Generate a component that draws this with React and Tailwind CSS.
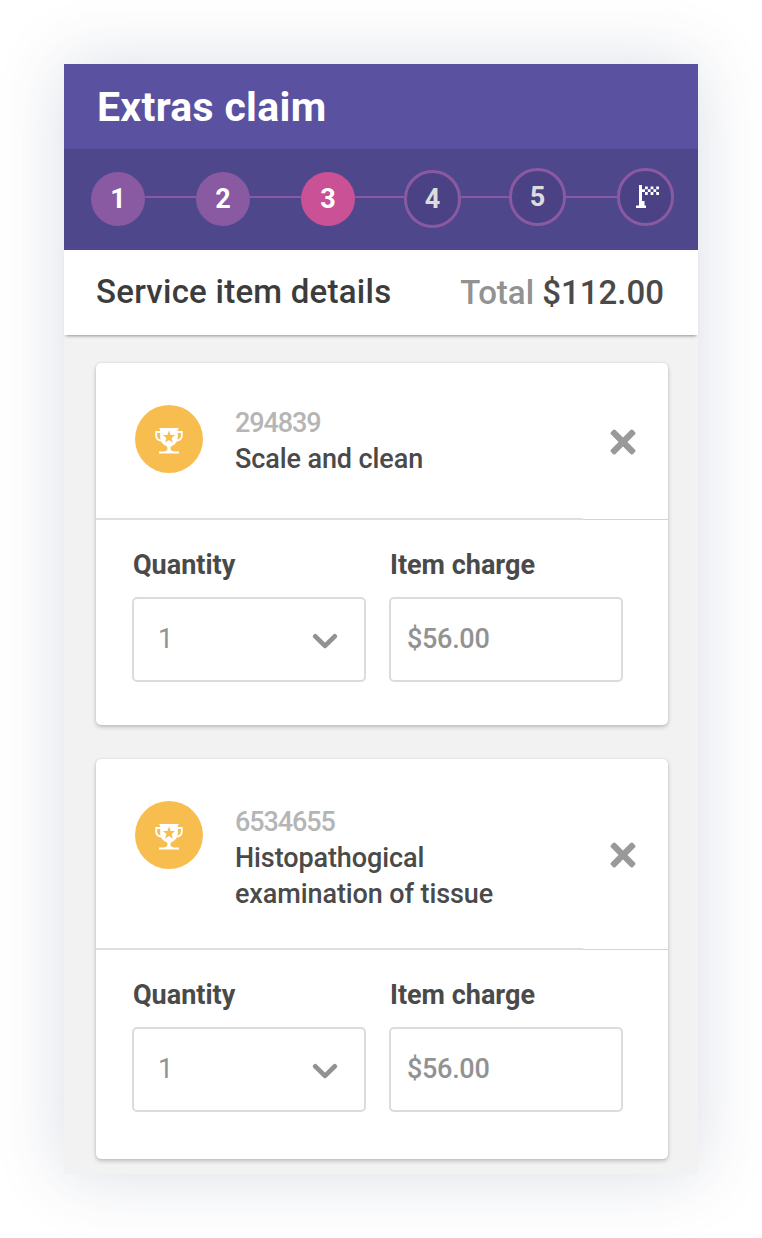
const steps = [
  { label: '1', state: 'done', line: 'w-[51px]' },
  { label: '2', state: 'done', line: 'w-[51px]' },
  { label: '3', state: 'current', line: 'w-[49px]' },
  { label: '4', state: 'todo', offset: 'mt-[3px]', line: 'w-12' },
  { label: '5', state: 'todo', offset: 'mt-0', line: 'w-[51px]' },
  { label: 'flag', state: 'todo', offset: 'mt-0' },
];

const items = [
  {
    code: '294839',
    name: ['Scale and clean'],
    head: 'h-[155px]',
    textTop: 'mt-[42px]',
    closeTop: 'mt-[66px]',
    body: 'h-[205px]',
  },
  {
    code: '6534655',
    name: ['Histopathogical', 'examination of tissue'],
    head: 'h-[189px]',
    textTop: 'mt-[45px]',
    closeTop: 'mt-[83px]',
    body: 'h-[209px]',
  },
];

function FlagIcon() {
  return (
    <svg className="ml-1" width="24" height="24" viewBox="0 0 24 24" fill="#fff">
      <path d="M3 0h3v16h2.500v4.500H10V23H0v-2.500h3z" />
      <path d="M9 1.500h2.800v2.800H9zM14.600 1.500h2.800v2.800h-2.800zM20.200 1.500H23v2.800h-2.800zM6 4.300h3v2.800H6zM11.800 4.300h2.800v2.800h-2.800zM17.400 4.300h2.800v2.800h-2.800zM9 7.100h2.800v2.800H9zM14.600 7.100h2.800v2.800h-2.800zM20.200 7.100H23v2.800h-2.800z" />
    </svg>
  );
}

function TrophyIcon() {
  return (
    <svg width="28" height="26" viewBox="0 0 28 26" fill="none">
      <path d="M6 4H1.200v3.500c0 3 1.600 4.800 5.300 5.200M22 4h4.800v3.500c0 3-1.600 4.800-5.300 5.200" stroke="#fff" strokeWidth="1.8" />
      <path
        d="M4.300 0h19.400c0 1-.9 1.300-.9 2.300v6.700c0 4.500-2.600 7.600-6.300 9.300-.9.400-1 1.200-1 2.200 0 1.700 1.300 2.600 3.500 2.900h5V25.500H4v-2.100h5c2.200-.3 3.500-1.200 3.500-2.900 0-1-.1-1.800-1-2.200C7.800 16.600 5.200 13.500 5.200 9V2.300C5.200 1.300 4.300 1 4.300 0z"
        fill="#fff"
      />
      <path d="M14 2.600l1.600 4.300 4.500.2-3.500 2.900 1.200 4.400-3.800-2.500-3.800 2.500 1.200-4.400-3.500-2.900 4.500-.2z" fill="#f7bd4e" />
    </svg>
  );
}

function CloseIcon() {
  return (
    <svg width="26" height="26" viewBox="0 0 26 26" fill="#999">
      <rect x="-2.500" y="9.900" width="31" height="6.200" rx="1.800" transform="rotate(45 13 13)" />
      <rect x="-2.500" y="9.900" width="31" height="6.200" rx="1.800" transform="rotate(-45 13 13)" />
    </svg>
  );
}

function ChevronIcon() {
  return (
    <svg className="mt-0.5" width="26" height="16" viewBox="0 0 26 16" fill="none" stroke="#929292" strokeWidth="4.800" strokeLinecap="round" strokeLinejoin="round">
      <path d="M3.300 3.400l9.700 9.500 9.700-9.500" />
    </svg>
  );
}

function Step({ label, state, offset }) {
  if (state === 'todo') {
    return (
      <div className={`flex h-[58px] w-[57px] shrink-0 items-center justify-center rounded-full border-[3px] border-[#895aa1] bg-[#4a4284] text-[27px] font-bold text-[#dcdcdc] ${offset}`}>
        {label === 'flag' ? <FlagIcon /> : <span className="pt-px">{label}</span>}
      </div>
    );
  }
  return (
    <div
      className={`mt-[3px] flex size-[54px] shrink-0 items-center justify-center rounded-full text-[27px] font-bold text-white ${
        state === 'current' ? 'bg-[#cb5197]' : 'bg-[#895aa1]'
      }`}
    >
      <span className="pt-0.5">{label}</span>
    </div>
  );
}

function ItemCard({ item }) {
  return (
    <section className="w-[572px] rounded-[5px] bg-white shadow-[0_2px_4px_rgba(0,0,0,0.22),0_0_2px_rgba(0,0,0,0.1)]">
      <div className={`flex items-start ${item.head}`}>
        <div className="mt-[42px] ml-[39px] flex size-[68px] shrink-0 items-center justify-center rounded-full bg-[#f7bd4e] pt-1">
          <TrophyIcon />
        </div>
        <div className={`ml-8 w-[375px] text-[27px] leading-9 font-medium whitespace-nowrap text-[#4a4a4a] ${item.textTop}`}>
          <p className="tracking-[-1.1px] text-[#b5b5b5]">{item.code}</p>
          {item.name.map((line) => (
            <p key={line} className="tracking-[-0.1px]">
              {line}
            </p>
          ))}
        </div>
        <button className={item.closeTop} aria-label="Remove item">
          <CloseIcon />
        </button>
      </div>
      <div className="flex items-end">
        <div className="h-0.5 w-[487px] bg-[#dfdfdf]" />
        <div className="h-px grow bg-[#d5d5d5]" />
      </div>
      <div className={`flex gap-[23px] pt-[27px] pl-9 ${item.body}`}>
        <div className="w-[234px]">
          <label className="block pl-px text-[27px] leading-9 font-bold text-[#4a4a4a]">Quantity</label>
          <div className="mt-3.5 flex h-[85px] items-center justify-between rounded-[5px] border-2 border-[#dcdcdc] pr-[26px] pl-6 text-[27px] text-[#929292]">
            <span>1</span>
            <ChevronIcon />
          </div>
        </div>
        <div className="w-[234px]">
          <label className="block pl-px text-[27px] leading-9 font-bold whitespace-nowrap text-[#4a4a4a]">Item charge</label>
          <div className="mt-3.5 flex h-[85px] items-center rounded-[5px] border-2 border-[#dcdcdc] pl-4 text-[27px] font-medium text-[#929292]">
            <span className="tracking-[-0.3px]">$56.00</span>
          </div>
        </div>
      </div>
    </section>
  );
}

export default function App() {
  return (
    <div className="h-[1238px] w-[762px] overflow-hidden bg-white p-16 font-['Roboto',sans-serif]">
      <main className="h-[1110px] w-[634px] bg-[#f2f2f2] shadow-[0_0_64px_rgba(50,65,105,0.18)]">
        <header className="flex h-[85px] items-center bg-[#5a51a1] pt-0.5 pl-[33px]">
          <h1 className="text-[41px] font-bold tracking-[0.3px] whitespace-nowrap text-white">Extras claim</h1>
        </header>
        <nav className="flex h-[101px] items-start bg-[#4f478b] pt-[19px] pl-[27px]">
          <div className="flex h-[58px] items-center">
            {steps.map((step) => (
              <div key={step.label} className="flex h-[58px] items-center">
                <Step {...step} />
                {step.line && <div className={`h-0.5 bg-[#895aa1] ${step.line}`} />}
              </div>
            ))}
          </div>
        </nav>
        <div className="flex h-[85px] items-center justify-between bg-white pr-[34px] pl-8 text-[33px] font-medium whitespace-nowrap shadow-[0_3px_3px_-2px_rgba(0,0,0,0.4)]">
          <h2 className="pb-0.5 tracking-[0.25px] text-[#3c3c3c]">Service item details</h2>
          <p className="text-[#4a4a4a]">
            <span className="text-[#929292]">Total</span> <span>$112.00</span>
          </p>
        </div>
        <div className="flex flex-col gap-[34px] pt-[28px] pl-8">
          {items.map((item) => (
            <ItemCard key={item.code} item={item} />
          ))}
        </div>
      </main>
    </div>
  );
}
